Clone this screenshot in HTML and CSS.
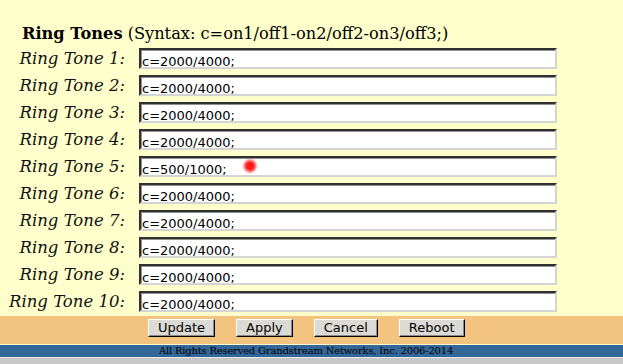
FILE: index.html
```html
<!DOCTYPE html>
<html lang="en">
<head>
    <meta charset="UTF-8">
    <title>Ring Tones</title>
    <link rel="stylesheet" href="styles.css">
</head>
<body>

    <div class="page">
        <h2 class="title"><b>Ring Tones</b> (Syntax: c=on1/off1-on2/off2-on3/off3;)</h2>

        <div class="tones">
            <label for="rt1">Ring Tone 1:</label><input id="rt1" type="text" value="c=2000/4000;">
            <label for="rt2">Ring Tone 2:</label><input id="rt2" type="text" value="c=2000/4000;">
            <label for="rt3">Ring Tone 3:</label><input id="rt3" type="text" value="c=2000/4000;">
            <label for="rt4">Ring Tone 4:</label><input id="rt4" type="text" value="c=2000/4000;">
            <label for="rt5">Ring Tone 5:</label><input id="rt5" type="text" value="c=500/1000;">
            <label for="rt6">Ring Tone 6:</label><input id="rt6" type="text" value="c=2000/4000;">
            <label for="rt7">Ring Tone 7:</label><input id="rt7" type="text" value="c=2000/4000;">
            <label for="rt8">Ring Tone 8:</label><input id="rt8" type="text" value="c=2000/4000;">
            <label for="rt9">Ring Tone 9:</label><input id="rt9" type="text" value="c=2000/4000;">
            <label for="rt10">Ring Tone 10:</label><input id="rt10" type="text" value="c=2000/4000;">
        </div>

        <!-- pointer highlight -->
        <span class="pointer"></span>
    </div>

    <div class="actions">
        <button>Update</button>
        <button>Apply</button>
        <button>Cancel</button>
        <button>Reboot</button>
    </div>

    <div class="footer">All Rights Reserved Grandstream Networks, Inc. 2006-2014</div>

</body>
</html>
```

FILE: styles.css
```css
body { margin: 0; background: #c8c8c8; font-family: "DejaVu Serif", serif; color: #000; }

.page { position: relative; background: #ffffcc; padding: 24px 0 4px; }
.title { margin: 0 0 5px 22px; font-size: 16.2px; font-weight: normal; line-height: 19px; }

.tones { display: grid; grid-template-columns: 125px 418px; column-gap: 14px; row-gap: 6px; align-items: center; }
.tones label { text-align: right; font-style: italic; font-size: 16.5px; line-height: 19px; color: #111; }
.tones input {
    box-sizing: border-box; width: 418px; height: 21px; margin: 0;
    padding: 6px 1px 0; line-height: 13px;
    font-family: "DejaVu Sans", sans-serif; font-size: 13px; color: #000; background: #fff;
    border: 2px solid; border-color: #303030 #d4d4d4 #d4d4d4 #303030;
    box-shadow: inset 1px 1px 0 #909090; outline: none;
}

.pointer {
    position: absolute; left: 242px; top: 158px; width: 16px; height: 16px; border-radius: 50%;
    background: radial-gradient(circle, #ff1a1a 30%, rgba(255, 40, 40, 0.55) 50%, rgba(255, 0, 0, 0) 70%);
}

.actions { box-sizing: border-box; height: 28px; background: #f3c47f; padding: 3px 0 0 148px; display: flex; gap: 21px; align-items: flex-start; }
.actions button {
    height: 18px; padding: 0 9px; margin: 0;
    font-family: "DejaVu Sans", sans-serif; font-size: 13px; line-height: 14px; color: #000;
    background: #dcdad5; border: 1px solid; border-color: #fff #000 #000 #fff;
    box-shadow: inset -1px -1px 0 #8a8a8a;
}

.footer {
    height: 12px; line-height: 12px; padding-right: 11px;
    background: #336699; border-top: 1px solid #ffffcc; border-bottom: 1px solid #e8e8e8;
    text-align: center; font-size: 10px; letter-spacing: -0.2px; color: #000;
}
```
